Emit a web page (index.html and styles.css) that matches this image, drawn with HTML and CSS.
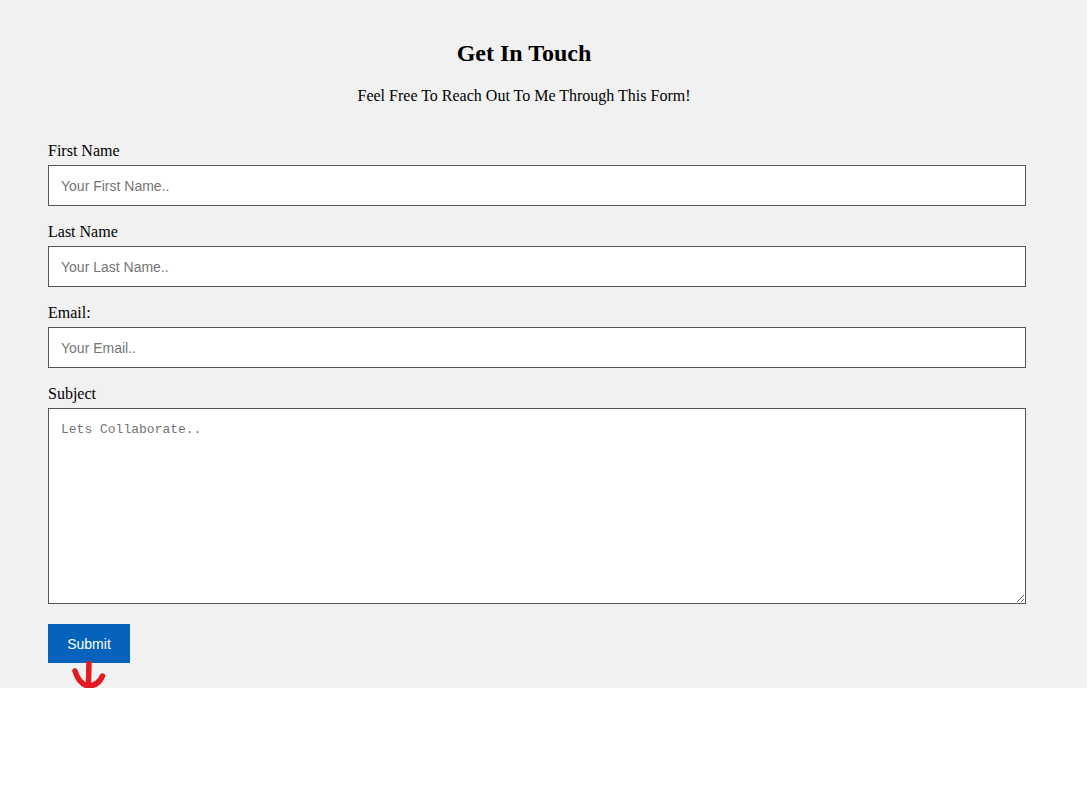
FILE: index.html
```html
<!DOCTYPE html>
<html lang="en">
<head>
<meta charset="utf-8">
<title>Contact</title>
<link rel="stylesheet" href="styles.css">
</head>
<body>
<section class="contact">
  <div class="contact-head">
    <h2 class="contact-title">Get In Touch</h2>
    <p class="contact-sub">Feel Free To Reach Out To Me Through This Form!</p>
  </div>
  <form class="contact-form">
    <label class="field-label" for="fname">First Name</label>
    <input class="field-input" id="fname" type="text" placeholder="Your First Name..">
    <label class="field-label" for="lname">Last Name</label>
    <input class="field-input" id="lname" type="text" placeholder="Your Last Name..">
    <label class="field-label" for="email">Email:</label>
    <input class="field-input" id="email" type="text" placeholder="Your Email..">
    <label class="field-label" for="subject">Subject</label>
    <textarea class="field-area" id="subject" placeholder="Lets Collaborate.."></textarea>
    <div class="submit-wrap">
      <button class="submit-btn" type="button">Submit</button>
      <svg class="submit-mark" width="40" height="32" viewBox="0 0 40 32">
        <path d="M19 2 L18.5 21" fill="none" stroke="#e11b1f" stroke-width="5.5" stroke-linecap="round"/>
        <path d="M5 10 Q9 23 18 25 Q28 25 32.5 15" fill="none" stroke="#e11b1f" stroke-width="5.5" stroke-linecap="round"/>
      </svg>
    </div>
  </form>
</section>
</body>
</html>
```
FILE: styles.css
```css
body {
  margin: 0;
  background: #ffffff;
  font-family: "Liberation Serif", "Times New Roman", serif;
  color: #000;
}

.contact {
  background: #f1f1f1;
  padding: 39px 0 25px;
}

.contact-head {
  text-align: center;
  padding-right: 39px;
}

.contact-title {
  margin: 0;
  font-size: 24px;
  line-height: 28px;
  font-weight: bold;
}

.contact-sub {
  margin: 20px 0 0;
  font-size: 16px;
  line-height: 18px;
}

.contact-form {
  margin: 36px 0 0 48px;
  width: 978px;
}

.field-label {
  display: block;
  font-size: 16px;
  line-height: 18px;
  padding-top: 1px;
  margin-bottom: 5px;
}

.field-input,
.field-area {
  display: block;
  box-sizing: border-box;
  width: 100%;
  margin: 0 0 16px;
  border: 1px solid #555;
  background: #fff;
  padding: 0 12px;
  outline: none;
}

.field-input {
  height: 41px;
  font-family: "Liberation Sans", Arial, sans-serif;
  font-size: 14px;
}

.field-input::placeholder {
  color: #757575;
}

.field-area {
  height: 196px;
  padding-top: 13px;
  margin-bottom: 20px;
  font-family: "Liberation Mono", "Courier New", monospace;
  font-size: 13px;
  resize: both;
}

.field-area::placeholder {
  color: #757575;
}

.submit-wrap {
  position: relative;
  height: 39px;
}

.submit-btn {
  display: block;
  width: 82px;
  height: 39px;
  border: none;
  background: #0563bb;
  color: #fff;
  font-family: "Liberation Sans", Arial, sans-serif;
  font-size: 14px;
  padding: 0;
  cursor: pointer;
}

.submit-mark {
  position: absolute;
  left: 22px;
  top: 37px;
}
```
